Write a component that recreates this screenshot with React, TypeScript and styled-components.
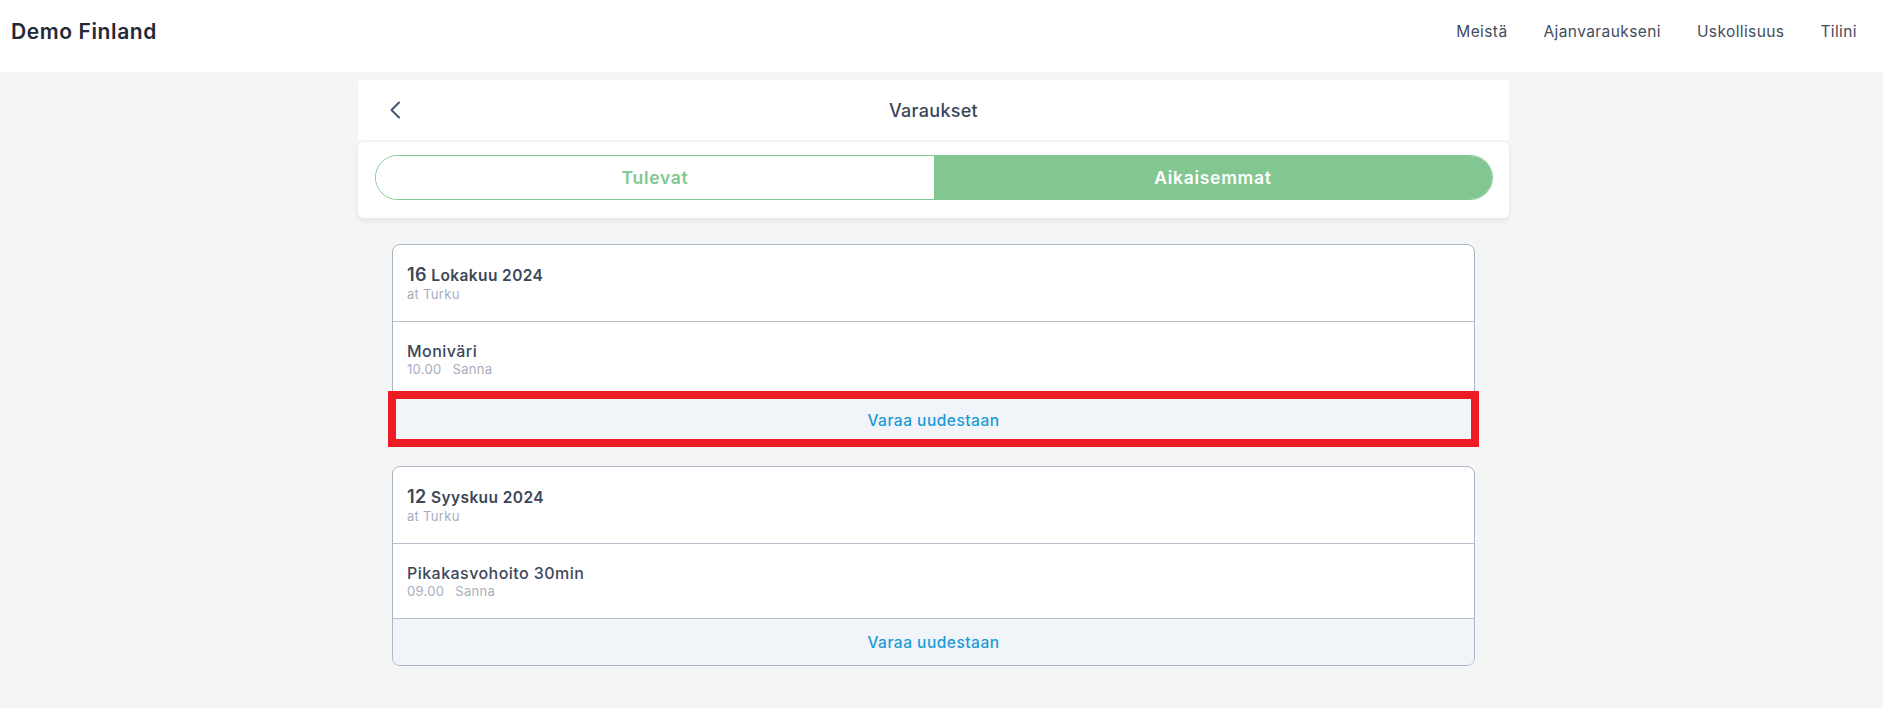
import React from "react";
import styled, { createGlobalStyle } from "styled-components";

const GlobalStyle = createGlobalStyle`
  html, body {
    margin: 0;
    padding: 0;
    background: #f4f5f5;
    font-family: Inter, "Open Sans", "Liberation Sans", sans-serif;
    color: #3c4759;
  }
  * { box-sizing: border-box; }
`;

const TopBar = styled.header`
  height: 72px;
  background: #ffffff;
  display: flex;
  align-items: center;
  justify-content: space-between;
  padding: 0 26px 9px 11px;
`;

const Brand = styled.div`
  font-size: 21px;
  font-weight: 600;
  color: #1f2937;
  letter-spacing: 0.6px;
`;

const Nav = styled.nav`
  display: flex;
  align-items: center;
  gap: 36px;
`;

const NavLink = styled.a`
  font-size: 15.5px;
  font-weight: 400;
  letter-spacing: 0.4px;
  color: #434c5c;
  text-decoration: none;
`;

const Main = styled.main`
  padding: 8px 16px 0 0;
`;

const Column = styled.div`
  width: 1151px;
  margin: 0 auto;
`;

const TitleCard = styled.div`
  height: 60px;
  background: #ffffff;
  border-radius: 4px 4px 0 0;
  display: grid;
  grid-template-columns: 1fr auto 1fr;
  align-items: center;
`;

const BackButton = styled.button`
  justify-self: start;
  margin-left: 30px;
  width: 14px;
  height: 20px;
  padding: 0;
  border: none;
  background: none;
  display: flex;
  align-items: center;
  justify-content: center;
  cursor: pointer;
`;

const PageTitle = styled.h1`
  margin: 0;
  font-size: 18px;
  font-weight: 500;
  letter-spacing: 0.3px;
  color: #3b4658;
`;

const ToggleCard = styled.div`
  margin-top: 2px;
  background: #ffffff;
  border-radius: 6px;
  box-shadow: 0 3px 6px rgba(0, 0, 0, 0.07);
  padding: 13px 16px 18px 17px;
`;

const Pill = styled.div`
  height: 45px;
  display: grid;
  grid-template-columns: 1fr 1fr;
  border: 1px solid #82c891;
  border-radius: 23px;
  overflow: hidden;
`;

const Tab = styled.button<{ $active?: boolean }>`
  border: none;
  margin: 0;
  font-family: inherit;
  font-size: 17.5px;
  font-weight: 600;
  letter-spacing: 0.7px;
  cursor: pointer;
  background: ${(p) => (p.$active ? "#82c791" : "#ffffff")};
  color: ${(p) => (p.$active ? "#ffffff" : "#82c891")};
`;

const List = styled.div`
  padding: 26px 34px 40px;
  display: flex;
  flex-direction: column;
  gap: 22px;
`;

const Card = styled.div`
  background: #ffffff;
  border: 1px solid #aeb6c5;
  border-radius: 8px;
`;

const Section = styled.div<{ $top: number; $bottom: number }>`
  padding: ${(p) => p.$top}px 14px ${(p) => p.$bottom}px;
  border-bottom: 1px solid #b8bfcc;
`;

const DateLine = styled.div`
  line-height: 20px;
  font-weight: 600;
  color: #3c4759;
  font-size: 15.5px;
  letter-spacing: 0.4px;
`;

const Day = styled.span`
  font-size: 18px;
`;

const ServiceName = styled.div`
  line-height: 20px;
  font-size: 16px;
  font-weight: 500;
  letter-spacing: 0.45px;
  color: #3c4759;
`;

const Meta = styled.div`
  line-height: 16px;
  font-size: 13px;
  letter-spacing: 0.3px;
  color: #a6aebd;
  display: flex;
  gap: 11px;
`;

const RebookButton = styled.button`
  position: relative;
  display: block;
  width: 100%;
  height: 46px;
  border: none;
  margin: 0;
  background: #f1f4f8;
  border-radius: 0 0 7px 7px;
  font-family: inherit;
  font-size: 15.5px;
  font-weight: 500;
  letter-spacing: 0.5px;
  color: #1a9ad6;
  cursor: pointer;
`;

const Highlight = styled.span`
  position: absolute;
  left: -5px;
  right: -5px;
  top: -6px;
  bottom: -4px;
  border: 8px solid #ed1c24;
  pointer-events: none;
`;

type Booking = {
  day: string;
  monthYear: string;
  place: string;
  service: string;
  time: string;
  staff: string;
  highlighted?: boolean;
};

const bookings: Booking[] = [
  {
    day: "16",
    monthYear: "Lokakuu 2024",
    place: "at Turku",
    service: "Moniväri",
    time: "10.00",
    staff: "Sanna",
    highlighted: true,
  },
  {
    day: "12",
    monthYear: "Syyskuu 2024",
    place: "at Turku",
    service: "Pikakasvohoito 30min",
    time: "09.00",
    staff: "Sanna",
  },
];

const Chevron = () => (
  <svg width="12" height="18" viewBox="0 0 12 18" fill="none">
    <polyline
      points="10,1.5 2.5,9 10,16.5"
      stroke="#3e5573"
      strokeWidth="2"
      strokeLinecap="round"
      strokeLinejoin="round"
    />
  </svg>
);

export default function App() {
  return (
    <>
      <GlobalStyle />
      <TopBar>
        <Brand>Demo Finland</Brand>
        <Nav>
          <NavLink>Meistä</NavLink>
          <NavLink>Ajanvaraukseni</NavLink>
          <NavLink>Uskollisuus</NavLink>
          <NavLink>Tilini</NavLink>
        </Nav>
      </TopBar>
      <Main>
        <Column>
          <TitleCard>
            <BackButton aria-label="Takaisin">
              <Chevron />
            </BackButton>
            <PageTitle>Varaukset</PageTitle>
            <span />
          </TitleCard>
          <ToggleCard>
            <Pill>
              <Tab>Tulevat</Tab>
              <Tab $active>Aikaisemmat</Tab>
            </Pill>
          </ToggleCard>
          <List>
            {bookings.map((b) => (
              <Card key={b.day + b.monthYear}>
                <Section $top={20} $bottom={19}>
                  <DateLine>
                    <Day>{b.day}</Day> {b.monthYear}
                  </DateLine>
                  <Meta>{b.place}</Meta>
                </Section>
                <Section $top={19} $bottom={19}>
                  <ServiceName>{b.service}</ServiceName>
                  <Meta>
                    <span>{b.time}</span>
                    <span>{b.staff}</span>
                  </Meta>
                </Section>
                <RebookButton>
                  Varaa uudestaan
                  {b.highlighted && <Highlight />}
                </RebookButton>
              </Card>
            ))}
          </List>
        </Column>
      </Main>
    </>
  );
}
